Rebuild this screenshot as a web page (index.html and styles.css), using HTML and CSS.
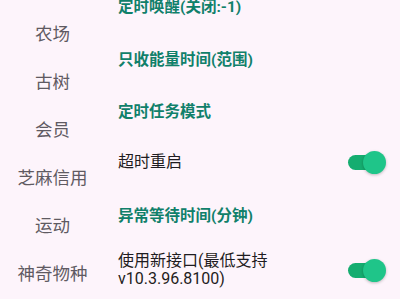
FILE: index.html
```html
<!DOCTYPE html>
<html lang="zh">
<head>
    <meta charset="UTF-8">
    <meta name="viewport" content="width=device-width, initial-scale=1.0">
    <title>设置</title>
    <link rel="stylesheet" href="styles.css">
</head>
<body>

    <div class="page">
        <!-- 左侧分类 -->
        <div class="tabs">
            <div class="tab">农场</div>
            <div class="tab">古树</div>
            <div class="tab">会员</div>
            <div class="tab">芝麻信用</div>
            <div class="tab">运动</div>
            <div class="tab">神奇物种</div>
        </div>

        <!-- 右侧设置项 -->
        <div class="settings">
            <div class="row first"><span class="title">定时唤醒(关闭:-1)</span></div>
            <div class="row"><span class="title">只收能量时间(范围)</span></div>
            <div class="row"><span class="title">定时任务模式</span></div>
            <div class="row">
                <span class="label">超时重启</span>
                <span class="switch"><span class="thumb"></span></span>
            </div>
            <div class="row"><span class="title">异常等待时间(分钟)</span></div>
            <div class="row tall">
                <span class="label">使用新接口(最低支持<br>v10.3.96.8100)</span>
                <span class="switch"><span class="thumb"></span></span>
            </div>
        </div>
    </div>

</body>
</html>
```

FILE: styles.css
```css
  body {
      margin: 0;
      background: #fdf4fb;
      font-family: Roboto, "Noto Sans CJK SC", sans-serif;
      overflow: hidden;
      height: 299px;
  }

  .page {
      display: flex;
  }

  .tabs {
      width: 105px;
      padding-top: 10px;
      flex-shrink: 0;
  }

  .tab {
      height: 48px;
      line-height: 48px;
      text-align: center;
      font-size: 17.5px;
      color: #5f5a62;
  }

  .settings {
      flex: 1;
      margin-top: -22px;
      padding-left: 13px;
      padding-right: 15px;
  }

  .row {
      display: flex;
      align-items: center;
      justify-content: space-between;
      min-height: 52px;
      box-sizing: border-box;
  }

  .row.first {
      min-height: 54px;
  }

  .row.tall {
      padding: 12px 0;
  }

  .title {
      font-size: 15.5px;
      font-weight: bold;
      color: #10806a;
  }

  .label {
      font-size: 16px;
      line-height: 18px;
      color: #1f1c21;
  }

  /* 开关 */
  .switch {
      position: relative;
      width: 34px;
      height: 15px;
      border-radius: 8px;
      background: #15ad70;
      margin-right: 3px;
      flex-shrink: 0;
  }

  .thumb {
      position: absolute;
      right: -4px;
      top: -4px;
      width: 23px;
      height: 23px;
      border-radius: 50%;
      background: #1fc589;
      box-shadow: 0 1px 3px rgba(0, 0, 0, 0.25);
  }
```
